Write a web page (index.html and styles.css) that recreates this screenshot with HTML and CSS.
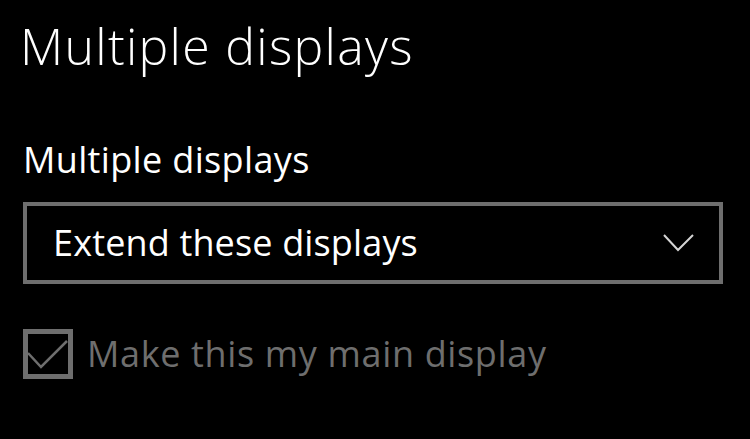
FILE: index.html
```html
<!DOCTYPE html>
<html>
<head>
<meta charset="utf-8">
<link rel="stylesheet" href="styles.css">
</head>
<body>
<div class="page">
  <h1 class="title">Multiple displays</h1>
  <div class="label">Multiple displays</div>
  <div class="dropdown">
    <span class="dropdown-text">Extend these displays</span>
    <svg class="chevron" width="32" height="18" viewBox="0 0 32 18">
      <polyline points="1,1 15,16 30,1" fill="none" stroke="#d4d4d4" stroke-width="2"/>
    </svg>
  </div>
  <div class="check-row">
    <div class="checkbox">
      <svg width="40" height="40" viewBox="0 0 40 40">
        <polyline points="0,19 13,33 39,7" fill="none" stroke="#6e6e6e" stroke-width="2.5"/>
      </svg>
    </div>
    <span class="check-label">Make this my main display</span>
  </div>
</div>
</body>
</html>
```
FILE: styles.css
```css
html, body {
  margin: 0;
  padding: 0;
  background: #000;
}
body {
  font-family: "Open Sans", "Noto Sans", sans-serif;
  color: #fff;
  width: 750px;
  height: 439px;
  overflow: hidden;
}
.page {
  display: flex;
  flex-direction: column;
  align-items: flex-start;
  padding: 0 0 0 20px;
}
.title {
  margin: 0;
  font-size: 50px;
  font-weight: 350;
  line-height: 60px;
  padding-top: 16px;
  letter-spacing: 1.3px;
}
.label {
  margin-top: 62px;
  font-size: 36px;
  line-height: 44px;
  padding-left: 3px;
  letter-spacing: 0.35px;
}
.dropdown {
  margin-top: 20px;
  margin-left: 3px;
  box-sizing: border-box;
  width: 700px;
  height: 82px;
  border: 4px solid #6e6e6e;
  display: flex;
  align-items: center;
  justify-content: space-between;
  padding: 0 24px 0 26px;
}
.dropdown-text {
  font-size: 36px;
  line-height: 44px;
  letter-spacing: 0.15px;
}
.chevron {
  display: block;
}
.check-row {
  margin-top: 45px;
  margin-left: 3px;
  display: flex;
  align-items: center;
  gap: 14px;
}
.checkbox {
  box-sizing: border-box;
  width: 50px;
  height: 50px;
  border: 5px solid #6e6e6e;
  display: flex;
  align-items: center;
  justify-content: center;
}
.checkbox svg {
  display: block;
}
.check-label {
  font-size: 36px;
  line-height: 44px;
  color: #6e6e6e;
  letter-spacing: 0.65px;
}
```
